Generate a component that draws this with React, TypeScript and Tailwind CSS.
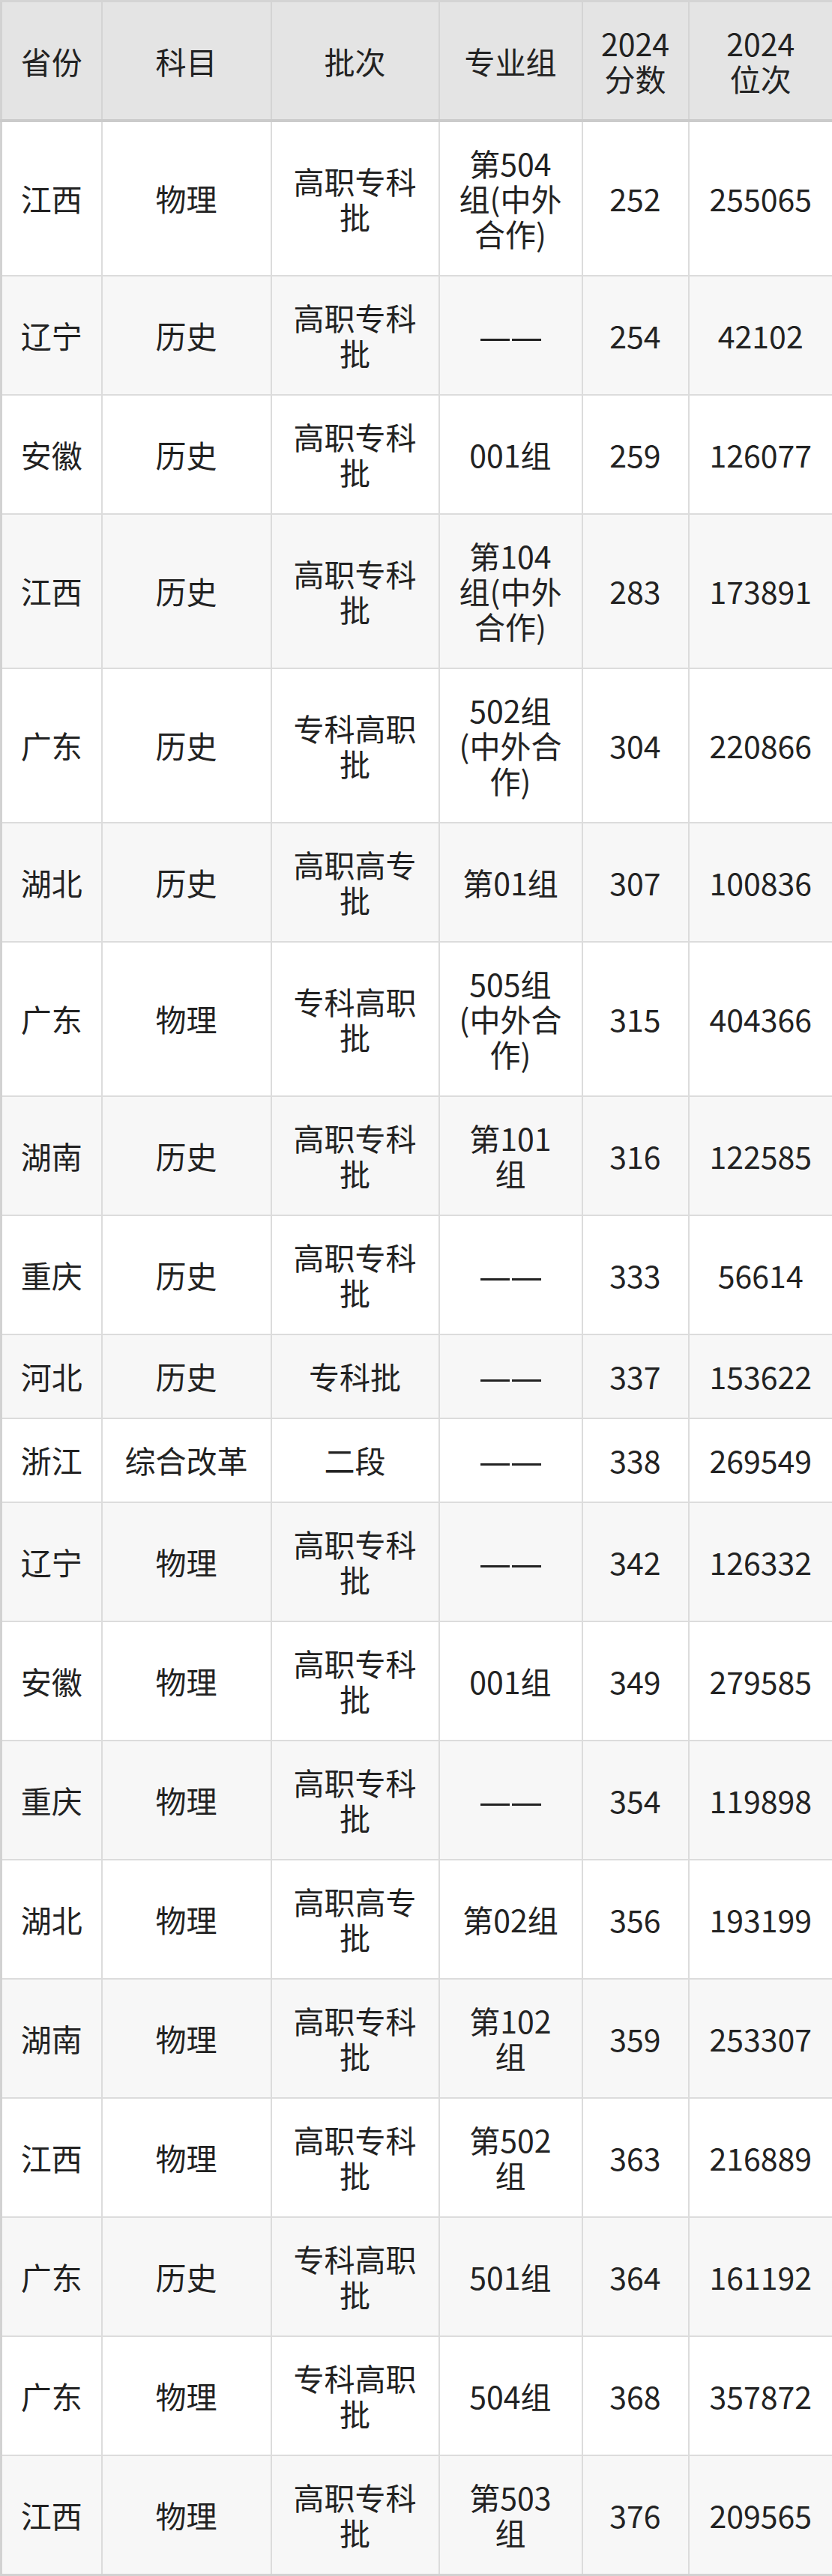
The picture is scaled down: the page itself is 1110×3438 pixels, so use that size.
const header = ["省份", "科目", "批次", "专业组", "2024\n分数", "2024\n位次"];

const rows: string[][] = [
  ["江西", "物理", "高职专科\n批", "第504\n组(中外\n合作)", "252", "255065"],
  ["辽宁", "历史", "高职专科\n批", "——", "254", "42102"],
  ["安徽", "历史", "高职专科\n批", "001组", "259", "126077"],
  ["江西", "历史", "高职专科\n批", "第104\n组(中外\n合作)", "283", "173891"],
  ["广东", "历史", "专科高职\n批", "502组\n(中外合\n作)", "304", "220866"],
  ["湖北", "历史", "高职高专\n批", "第01组", "307", "100836"],
  ["广东", "物理", "专科高职\n批", "505组\n(中外合\n作)", "315", "404366"],
  ["湖南", "历史", "高职专科\n批", "第101\n组", "316", "122585"],
  ["重庆", "历史", "高职专科\n批", "——", "333", "56614"],
  ["河北", "历史", "专科批", "——", "337", "153622"],
  ["浙江", "综合改革", "二段", "——", "338", "269549"],
  ["辽宁", "物理", "高职专科\n批", "——", "342", "126332"],
  ["安徽", "物理", "高职专科\n批", "001组", "349", "279585"],
  ["重庆", "物理", "高职专科\n批", "——", "354", "119898"],
  ["湖北", "物理", "高职高专\n批", "第02组", "356", "193199"],
  ["湖南", "物理", "高职专科\n批", "第102\n组", "359", "253307"],
  ["江西", "物理", "高职专科\n批", "第502\n组", "363", "216889"],
  ["广东", "历史", "专科高职\n批", "501组", "364", "161192"],
  ["广东", "物理", "专科高职\n批", "504组", "368", "357872"],
  ["江西", "物理", "高职专科\n批", "第503\n组", "376", "209565"],
];

function Dash() {
  // two separate bars, like the doubled em dash in the source
  return (
    <span className="inline-flex items-center gap-[3px] align-middle">
      <span className="block h-[3px] w-[39px] bg-[#222]" />
      <span className="block h-[3px] w-[39px] bg-[#222]" />
    </span>
  );
}

export default function App() {
  return (
    <div className="w-[1110px] bg-white font-['Noto_Sans_CJK_SC','Noto_Sans',sans-serif] text-[41px] leading-[47px] text-[#222]">
      <table className="w-full table-fixed border-collapse border-[3px] border-[#d2d2d2]">
        <colgroup>
          <col className="w-[134px]" />
          <col className="w-[226px]" />
          <col className="w-[224px]" />
          <col className="w-[191px]" />
          <col className="w-[142px]" />
          <col className="w-[193px]" />
        </colgroup>
        <thead>
          <tr className="bg-[#e4e4e4]">
            {header.map((h) => (
              <th
                key={h}
                className="whitespace-pre-line border-2 border-t-[3px] border-b-4 border-[#d4d4d4] border-b-[#cbcbcb] px-2 pt-[31px] pb-[31px] text-center font-normal"
              >
                {h}
              </th>
            ))}
          </tr>
        </thead>
        <tbody>
          {rows.map((r, i) => (
            <tr key={i} className={i % 2 === 0 ? "bg-white" : "bg-[#f7f7f7]"}>
              {r.map((c, j) => (
                <td
                  key={j}
                  className="whitespace-pre-line border-2 border-[#dcdcdc] px-2 pt-[31px] pb-[32px] text-center align-middle"
                >
                  {c === "——" ? <Dash /> : c}
                </td>
              ))}
            </tr>
          ))}
        </tbody>
      </table>
    </div>
  );
}
